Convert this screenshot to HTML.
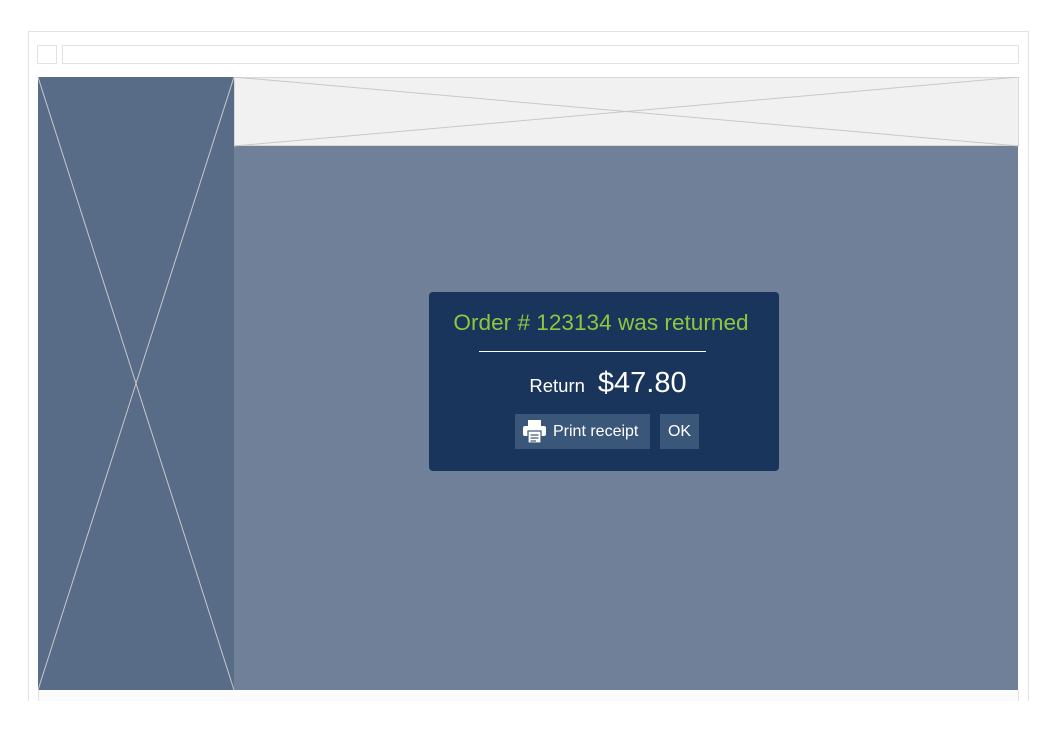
<!DOCTYPE html>
<html><head><style>
body{margin:0;width:1055px;height:736px;background:#fff;position:relative;overflow:hidden;font-family:"Liberation Sans",sans-serif}
.a{position:absolute;box-sizing:border-box}
</style></head><body>
<div class="a" style="left:28px;top:31px;width:1001px;height:670px;border:1px solid #e2e2e2;border-bottom:none"></div>
<div class="a" style="left:37px;top:45px;width:20px;height:19px;border:1px solid #e2e2e2"></div>
<div class="a" style="left:62px;top:45px;width:957px;height:19px;border:1px solid #e2e2e2"></div>
<div class="a" style="left:38px;top:690px;width:981px;height:11px;background:#fbfbfb;border-right:1px solid #e2e2e2;border-left:1px solid #e2e2e2"></div>
<div class="a" style="left:38px;top:77px;width:196px;height:613px;background:#586b87"></div>
<div class="a" style="left:234px;top:77px;width:785px;height:69px;background:#f1f1f1;border:1px solid #d8d8d8"></div>
<div class="a" style="left:234px;top:146px;width:784px;height:544px;background:#6f8098"></div>
<svg class="a" style="left:38px;top:77px" width="981" height="613">
<g stroke="#c8c8c8" stroke-width="1" fill="none">
<line x1="0" y1="0" x2="196" y2="613"/><line x1="196" y1="0" x2="0" y2="613"/>
<line x1="196" y1="0" x2="981" y2="69"/><line x1="196" y1="69" x2="981" y2="0"/>
</g></svg>
<div class="a" style="left:429px;top:292px;width:350px;height:179px;background:#1a355b;border-radius:4px"></div>
<div class="a" style="left:429px;top:310px;width:344px;text-align:center;color:#8dc63f;font-size:22.6px">Order # 123134 was returned</div>
<div class="a" style="left:479px;top:351px;width:227px;height:1px;background:#fff"></div>
<div class="a" style="left:433px;top:367px;width:350px;text-align:center;color:#fff;white-space:nowrap"><span style="font-size:18.5px">Return</span><span style="display:inline-block;width:13px"></span><span style="font-size:29px">$47.80</span></div>
<div class="a" style="left:515px;top:414px;width:135px;height:35px;background:#3a5779;color:#fff;font-size:16px;line-height:35px;padding-left:38px">Print receipt</div>
<svg class="a" style="left:522px;top:419px" width="25" height="25" viewBox="0 0 25 25">
<rect x="6" y="1" width="13" height="6" fill="#fff"/>
<rect x="1" y="7" width="23" height="10" rx="2" fill="#fff"/>
<rect x="6" y="12" width="13" height="12" fill="#fff" stroke="#3a5779" stroke-width="1.2"/>
<g stroke="#3a5779" stroke-width="1.2"><line x1="8.5" y1="16" x2="16.5" y2="16"/><line x1="8.5" y1="19" x2="16.5" y2="19"/><line x1="8.5" y1="22" x2="14" y2="22"/></g>
</svg>
<div class="a" style="left:660px;top:414px;width:39px;height:35px;background:#3a5779;color:#fff;font-size:16px;line-height:35px;text-align:center">OK</div>
</body></html>
